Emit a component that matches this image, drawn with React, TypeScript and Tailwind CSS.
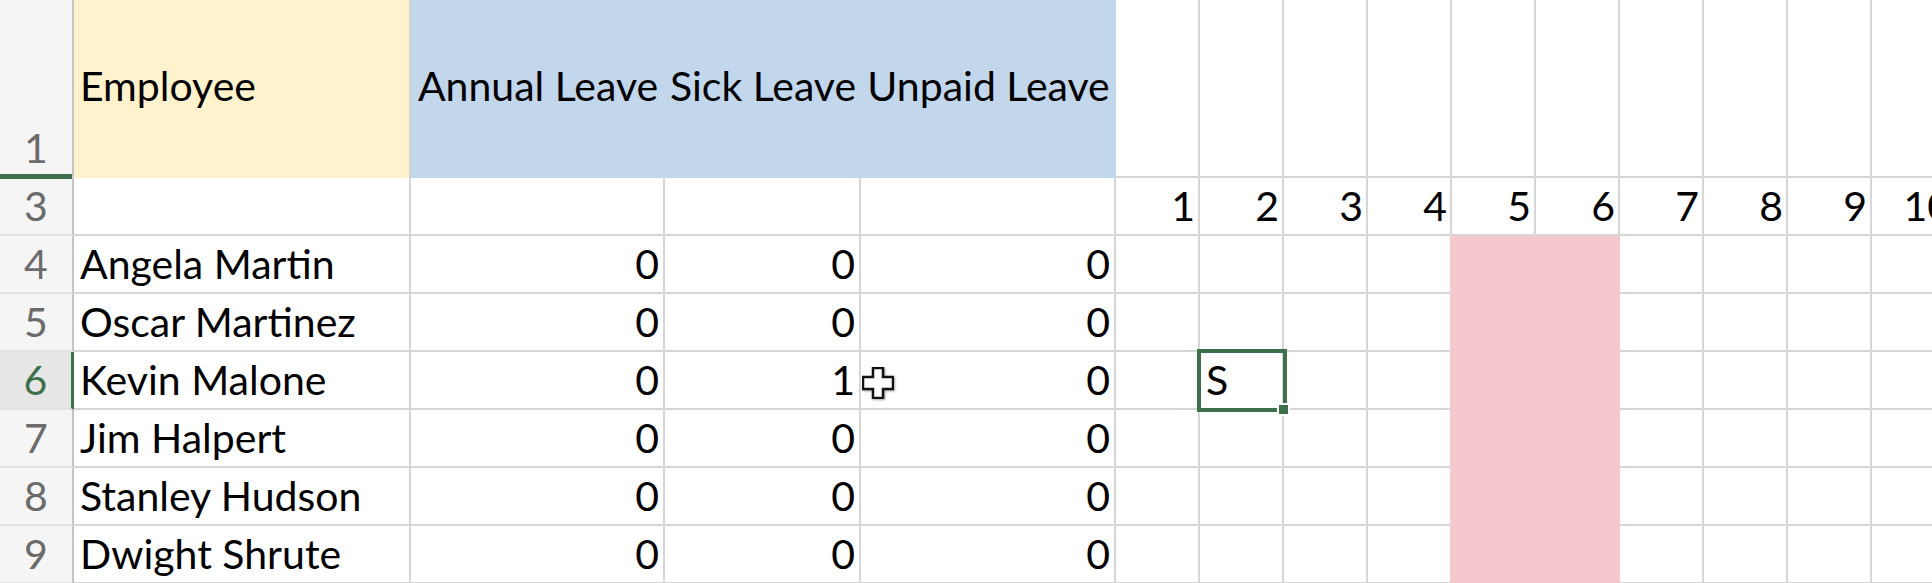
import React from 'react';

interface Employee {
  name: string;
  annual: number;
  sick: number;
  unpaid: number;
}

const employees: Employee[] = [
  { name: 'Angela Martin', annual: 0, sick: 0, unpaid: 0 },
  { name: 'Oscar Martinez', annual: 0, sick: 0, unpaid: 0 },
  { name: 'Kevin Malone', annual: 0, sick: 1, unpaid: 0 },
  { name: 'Jim Halpert', annual: 0, sick: 0, unpaid: 0 },
  { name: 'Stanley Hudson', annual: 0, sick: 0, unpaid: 0 },
  { name: 'Dwight Shrute', annual: 0, sick: 0, unpaid: 0 },
];

const days = [1, 2, 3, 4, 5, 6, 7, 8, 9, 10];
const ACTIVE_ROW = 6;

function RowHead({ n, active, marked }: { n: number; active?: boolean; marked?: boolean }) {
  return (
    <div
      className={`relative flex items-end justify-center pb-[8px] border-b-2 border-b-[#E2E2E2] leading-none ${
        active
          ? 'bg-[#E7E7E7] text-[#3F704D] border-r-[3px] border-r-[#3F704D]'
          : 'bg-[#F5F5F5] text-[#6B6B6B] border-r-2 border-r-[#C4C4C4]'
      }`}
    >
      {n}
      {marked && <div className="absolute left-0 right-0 -bottom-[3px] h-[5px] bg-[#3F704D] z-10" />}
    </div>
  );
}

function Cell({ children, className = '' }: { children?: React.ReactNode; className?: string }) {
  return (
    <div className={`relative flex items-end pb-[8px] leading-none whitespace-nowrap border-r-2 border-b-2 ${className}`}>
      {children}
    </div>
  );
}

// Excel-style thick cross cursor
function CrossCursor() {
  return (
    <svg width="32" height="32" viewBox="-1 -1 32 32" className="drop-shadow-[1px_1px_1px_rgba(0,0,0,0.35)]">
      <polygon
        points="10,0 20,0 20,9 30,9 30,21 20,21 20,30 10,30 10,21 0,21 0,9 10,9"
        fill="#ffffff"
        stroke="#111111"
        strokeWidth="2.5"
        strokeLinejoin="miter"
      />
    </svg>
  );
}

export default function App() {
  const gridLine = 'border-r-[#D6D6D6] border-b-[#D6D6D6]';

  return (
    <div className="w-[1932px] h-[583px] overflow-hidden bg-white font-['Lato','Liberation_Sans',sans-serif] text-[41px] text-black">
      <div className="grid grid-cols-[74px_337px_254px_196px_255px_repeat(10,84px)] grid-rows-[178px_repeat(7,58px)]">
        {/* Row 1 - headers */}
        <RowHead n={1} marked />
        <div className="flex items-start pt-[65px] pl-[6px] leading-none bg-[#FFF2CC] border-r-2 border-r-[#D2D2D2]">
          Employee
        </div>
        <div className="flex items-start justify-center pt-[65px] leading-none whitespace-nowrap bg-[#C2D6EC]">
          Annual Leave
        </div>
        <div className="flex items-start justify-center pt-[65px] leading-none whitespace-nowrap bg-[#C2D6EC]">
          Sick Leave
        </div>
        <div className="flex items-start justify-center pt-[65px] leading-none whitespace-nowrap bg-[#C2D6EC]">
          Unpaid Leave
        </div>
        {days.map((d) => (
          <Cell key={`h1-${d}`} className={gridLine} />
        ))}

        {/* Row 3 - day numbers */}
        <RowHead n={3} />
        <Cell className={gridLine} />
        <Cell className={gridLine} />
        <Cell className={gridLine} />
        <Cell className={gridLine} />
        {days.map((d) => (
          <Cell key={`d-${d}`} className={`justify-end pr-[3px] ${gridLine}`}>
            {d}
          </Cell>
        ))}

        {/* Rows 4-9 - employees */}
        {employees.map((emp, i) => {
          const rowNum = i + 4;
          const active = rowNum === ACTIVE_ROW;
          return (
            <React.Fragment key={emp.name}>
              <RowHead n={rowNum} active={active} />
              <Cell className={`pl-[6px] ${gridLine}`}>{emp.name}</Cell>
              <Cell className={`justify-end pr-[4px] ${gridLine}`}>{emp.annual}</Cell>
              <Cell className={`justify-end pr-[4px] ${gridLine}`}>{emp.sick}</Cell>
              <Cell className={`justify-end pr-[4px] ${gridLine}`}>
                {emp.unpaid}
                {active && (
                  <div className="absolute left-[1px] top-[15px] z-20">
                    <CrossCursor />
                  </div>
                )}
              </Cell>
              {days.map((d) => {
                if (d === 5 || d === 6) {
                  return <Cell key={`c-${d}`} className="bg-[#F5C8CF] border-r-[#F5C8CF] border-b-[#F5C8CF]" />;
                }
                if (d === 4) {
                  return <Cell key={`c-${d}`} className="border-r-[#F5C8CF] border-b-[#D6D6D6]" />;
                }
                if (active && d === 2) {
                  return (
                    <Cell key={`c-${d}`} className={`pl-[6px] ${gridLine}`}>
                      S
                      <div className="absolute -left-[3px] -top-[3px] w-[90px] h-[63px] border-[4px] border-[#3F704D] z-10" />
                      <div className="absolute left-[77px] top-[51px] w-[13px] h-[13px] bg-[#3F704D] border-2 border-white z-10" />
                    </Cell>
                  );
                }
                return <Cell key={`c-${d}`} className={gridLine} />;
              })}
            </React.Fragment>
          );
        })}
      </div>
    </div>
  );
}
